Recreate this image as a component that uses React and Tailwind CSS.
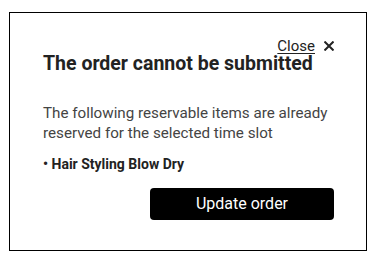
export default function App() {
  return (
    <div className="w-[376px] h-[261px] bg-white pt-[12px] pl-[9px]" style={{ fontFamily: 'Roboto, "Noto Sans", sans-serif' }}>
      <div className="w-[358px] h-[239px] border border-black box-border pt-[24px] pl-[33px] pr-[32px]">
        <div className="flex justify-end items-center h-[18px]">
          <span className="text-[15px] leading-[18px] underline text-[#222] underline-offset-[2px]">Close</span>
          <svg className="ml-[9px]" width="10" height="10" viewBox="0 0 10 10">
            <path d="M1.2 1.2L8.8 8.8M8.8 1.2L1.2 8.8" stroke="#222" strokeWidth="2" strokeLinecap="square" />
          </svg>
        </div>
        <h1 className="mt-[-3px] text-[19.5px] leading-[24px] font-bold text-[#222]">The order cannot be submitted</h1>
        <p className="mt-[27px] text-[15.2px] leading-[20px] text-[#444]">
          The following reservable items are already reserved for the selected time slot
        </p>
        <p className="mt-[11px] text-[14px] leading-[20px] font-bold text-[#222]">• Hair Styling Blow Dry</p>
        <div className="flex justify-end mt-[14px]">
          <button className="w-[184px] h-[32px] bg-black text-white rounded-[4px] text-[16px] leading-[20px]">Update order</button>
        </div>
      </div>
    </div>
  );
}
